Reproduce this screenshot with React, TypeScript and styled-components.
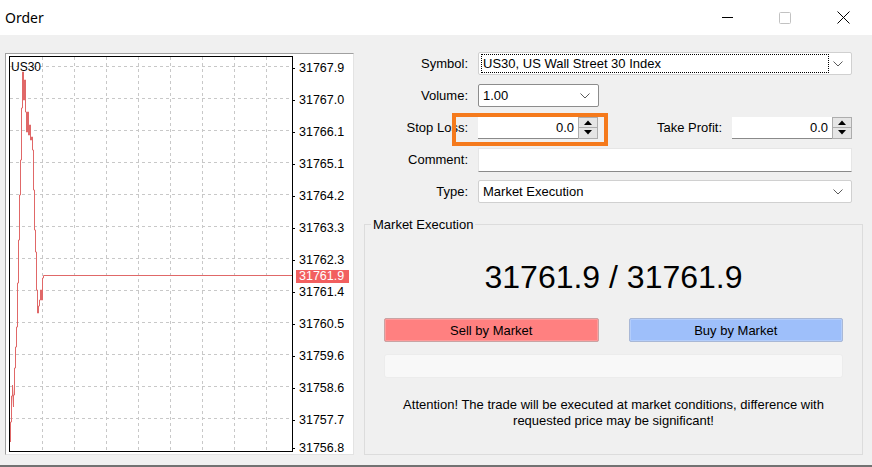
import React from 'react';
import styled, { createGlobalStyle } from 'styled-components';

const Global = createGlobalStyle`
  html, body { margin: 0; padding: 0; }
  body {
    width: 872px; height: 467px; overflow: hidden; background: #fff;
    font-family: "Liberation Sans", Arial, sans-serif; color: #000;
  }
`;

const Window = styled.div`
  width: 872px; height: 467px; display: flex; flex-direction: column; background: #f0f0f0;
`;

const TitleBar = styled.div`
  height: 35px; flex: none; background: #fff; display: flex; align-items: center;
`;

const Title = styled.div`
  flex: 1; padding-left: 5px; font-family: "Noto Sans", "Open Sans", sans-serif; font-size: 14px; color: #000;
`;

const WinButton = styled.div`
  width: 58px; height: 35px; display: flex; align-items: center; justify-content: center;
`;

const Body = styled.div`
  flex: 1; min-height: 0; display: flex; padding: 17px 0 0 5px; border-bottom: 2px solid #727272;
`;

/* ---------- chart ---------- */
const ChartPanel = styled.div`
  margin-top: 1px; width: 349px; height: 402px; box-sizing: border-box; flex: none;
  border: 1px solid; border-color: #a0a0a0 #e3e3e3 #e3e3e3 #a0a0a0;
  background: #fff; display: flex; padding: 2px 0 2px 3px;
`;

const PlotFrame = styled.div`
  position: relative; width: 284px; height: 396px; box-sizing: border-box; flex: none;
  border: 1px solid #000;
`;

const SymbolTag = styled.div`
  position: absolute; left: 1px; top: 3px; font-size: 12px; line-height: 14px;
`;

const Axis = styled.div`
  position: relative; flex: 1; display: flex; flex-direction: column;
`;

const AxisRow = styled.div<{ $last?: boolean }>`
  height: ${p => (p.$last ? 'auto' : '32px')}; flex: none; display: flex; align-items: flex-start;
  padding-top: ${p => (p.$last ? '1px' : '5px')}; box-sizing: border-box;
`;

const Tick = styled.span`
  width: 2px; height: 1px; background: #000; margin-top: 7px; flex: none;
`;

const AxisLabel = styled.span`
  margin-left: 4px; font-size: 12.5px; line-height: 14px;
`;

const PriceTag = styled.div`
  position: absolute; left: 3px; top: 214px; width: 53px; height: 13px;
  background: #f25f5f; color: #fff; font-size: 12.5px; line-height: 13px; padding-left: 3px; box-sizing: border-box;
`;

/* ---------- form ---------- */
const Form = styled.div`
  flex: 1; display: flex; flex-direction: column;
`;

const Fields = styled.div`
  display: flex; flex-direction: column; gap: 9px; padding-right: 20px;
`;

const Row = styled.div`
  position: relative; height: 23px; display: flex; align-items: center;
`;

const Label = styled.div<{ $w?: number }>`
  width: ${p => p.$w ?? 114}px; flex: none; text-align: right; font-size: 13px; margin-right: 10px;
`;

const Grow = styled.div`
  flex: 1;
`;

const SelectBox = styled.div<{ $w?: number; $dark?: boolean }>`
  ${p => (p.$w ? `width: ${p.$w}px; flex: none;` : 'flex: 1;')}
  height: 23px; box-sizing: border-box; background: #fff;
  border: 1px solid ${p => (p.$dark ? '#8c8c8c' : '#d0d0d0')}; border-radius: 2px;
  display: flex; align-items: center; padding: 0 8px 0 2px; font-size: 13px;
`;

const FocusText = styled.div`
  flex: 1; height: 19px; box-sizing: border-box; border: 1px dotted #000;
  display: flex; align-items: center; padding-left: 1px; margin-right: 4px;
`;

const PlainText = styled.div`
  flex: 1; padding-left: 2px;
`;

const NumInput = styled.div`
  width: 100px; height: 22px; box-sizing: border-box; background: #fff; flex: none;
  border-bottom: 1px solid #8a8a8a; font-size: 13px; display: flex; align-items: center; justify-content: flex-end;
  padding-right: 4px;
`;

const Spin = styled.div`
  width: 20px; height: 22px; box-sizing: border-box; flex: none;
  border: 1px solid #adadad; background: #e5e5e5; display: flex; flex-direction: column;
`;

const SpinHalf = styled.div<{ $top?: boolean }>`
  flex: 1; display: flex; align-items: center; justify-content: center;
  ${p => (p.$top ? 'border-bottom: 1px solid #adadad;' : '')}
`;

const TextField = styled.div`
  flex: 1; height: 24px; box-sizing: border-box; background: #fff;
  border: 1px solid #e6e6e6; border-bottom-color: #8a8a8a;
`;

const Highlight = styled.div`
  position: absolute; left: 98px; top: -3px; width: 156px; height: 33px; box-sizing: border-box;
  border: 4px solid #f57a1c; pointer-events: none;
`;

const Group = styled.fieldset`
  margin: 14px 9px 0 10px; padding: 0 19px 25px; border: 1px solid #dcdcdc; min-width: 0;
`;

const Legend = styled.legend`
  margin-left: -13px; padding: 0 2px; font-size: 13px; line-height: 15px;
`;

const Quote = styled.div`
  margin-top: 25px; height: 40px; line-height: 40px; text-align: center; font-size: 32px;
`;

const Buttons = styled.div`
  margin-top: 21px; display: flex; gap: 30px;
`;

const TradeButton = styled.div<{ $kind: 'sell' | 'buy' }>`
  flex: 1; height: 24px; box-sizing: border-box; border-radius: 2px;
  background: ${p => (p.$kind === 'sell' ? '#ff8080' : '#9ebffa')};
  border: 1px solid ${p => (p.$kind === 'sell' ? '#c9a3a3' : '#a9b8d6')};
  box-shadow: inset 0 0 0 1px ${p => (p.$kind === 'sell' ? '#ff9a9a' : '#b3cdfb')};
  display: flex; align-items: center; justify-content: center; font-size: 13px;
`;

const Bar = styled.div`
  margin-top: 12px; height: 24px; border-radius: 3px; background: #f8f8f8; border: 1px solid #ececec; box-sizing: border-box;
`;

const Notice = styled.div`
  margin-top: 19px; font-size: 13px; line-height: 16px; text-align: center; padding: 0 12px;
`;

/* ---------- icons ---------- */
const Chevron = () => (
  <svg width="10" height="6" viewBox="0 0 10 6">
    <path d="M0.5 0.5 L5 5 L9.5 0.5" fill="none" stroke="#5a5a5a" strokeWidth="1" />
  </svg>
);

const Arrow = ({ up }: { up?: boolean }) => (
  <svg width="8" height="5" viewBox="0 0 8 5">
    <path d={up ? 'M0 5 L4 0.5 L8 5 Z' : 'M0 0 L4 4.5 L8 0 Z'} fill="#000" />
  </svg>
);

const Spinner = () => (
  <Spin>
    <SpinHalf $top><Arrow up /></SpinHalf>
    <SpinHalf><Arrow /></SpinHalf>
  </Spin>
);

const linePath =
  'M10.5,442 V422 H11.5 V396 H12.5 V385 L13.5,407 V395 H14.5 V368 H15.5 V347 H16.5 V327 H17.5 V283 H18.5 V240 ' +
  'H19.5 V195 H20.5 V160 H21.5 V108 H22.5 V72 H23.5 V100 H24.5 V80 H25.5 V112 H26.5 V132 H27.5 V112 H28.5 V135 ' +
  'H29.5 V125 H30.5 V140 H31.5 V137 H32.5 V150 H33.5 V190 H34.5 V230 H35.5 V252 H36.5 V290 H37.5 V313 H38.5 V306 ' +
  'H39.5 V300 H40.5 V290 H41.5 V300 H42.5 V278 H43.5 V275.5 H292';

const ChartSvg = () => {
  const vx = [42, 74, 106, 138, 170, 202, 234, 266];
  const hy = [66, 98, 130, 162, 194, 226, 258, 290, 322, 354, 386, 418];
  return (
    <svg width="282" height="394" viewBox="0 0 282 394" style={{ display: 'block' }}>
      <g transform="translate(-10,-57)">
        {vx.map(x => (
          <line key={'v' + x} x1={x + 0.5} y1={57} x2={x + 0.5} y2={451} stroke="#c8c8c8" strokeDasharray="3 3" />
        ))}
        {hy.map(y => (
          <line key={'h' + y} x1={10} y1={y + 0.5} x2={292} y2={y + 0.5} stroke="#c8c8c8" strokeDasharray="3 3" />
        ))}
        <path d={linePath} fill="none" stroke="#e06868" strokeWidth="1" />
      </g>
    </svg>
  );
};

const prices = [
  '31767.9', '31767.0', '31766.1', '31765.1', '31764.2', '31763.3', '31762.3',
  '31761.4', '31760.5', '31759.6', '31758.6', '31757.7', '31756.8',
];

export default function App() {
  return (
    <>
      <Global />
      <Window>
        <TitleBar>
          <Title>Order</Title>
          <WinButton>
            <svg width="11" height="1" viewBox="0 0 11 1"><rect width="11" height="1" fill="#000" /></svg>
          </WinButton>
          <WinButton>
            <svg width="12" height="12" viewBox="0 0 12 12">
              <rect x="0.5" y="0.5" width="11" height="11" rx="1" fill="none" stroke="#c2c2c2" />
            </svg>
          </WinButton>
          <WinButton>
            <svg width="13" height="13" viewBox="0 0 13 13">
              <path d="M0.5 0.5 L12.5 12.5 M12.5 0.5 L0.5 12.5" stroke="#000" strokeWidth="1" />
            </svg>
          </WinButton>
        </TitleBar>
        <Body>
          <ChartPanel>
            <PlotFrame>
              <ChartSvg />
              <SymbolTag>US30</SymbolTag>
            </PlotFrame>
            <Axis>
              {prices.map((p, i) => (
                <AxisRow key={p} $last={i === prices.length - 1}>
                  <Tick />
                  <AxisLabel>{p}</AxisLabel>
                </AxisRow>
              ))}
              <PriceTag>31761.9</PriceTag>
            </Axis>
          </ChartPanel>
          <Form>
            <Fields>
              <Row>
                <Label>Symbol:</Label>
                <SelectBox>
                  <FocusText>US30, US Wall Street 30 Index</FocusText>
                  <Chevron />
                </SelectBox>
              </Row>
              <Row>
                <Label>Volume:</Label>
                <SelectBox $w={121} $dark>
                  <PlainText>1.00</PlainText>
                  <Chevron />
                </SelectBox>
              </Row>
              <Row>
                <Label>Stop Loss:</Label>
                <NumInput>0.0</NumInput>
                <Spinner />
                <Grow />
                <Label $w={110}>Take Profit:</Label>
                <NumInput>0.0</NumInput>
                <Spinner />
                <Highlight />
              </Row>
              <Row>
                <Label>Comment:</Label>
                <TextField />
              </Row>
              <Row>
                <Label>Type:</Label>
                <SelectBox>
                  <PlainText>Market Execution</PlainText>
                  <Chevron />
                </SelectBox>
              </Row>
            </Fields>
            <Group>
              <Legend>Market Execution</Legend>
              <Quote>31761.9 / 31761.9</Quote>
              <Buttons>
                <TradeButton $kind="sell">Sell by Market</TradeButton>
                <TradeButton $kind="buy">Buy by Market</TradeButton>
              </Buttons>
              <Bar />
              <Notice>
                Attention! The trade will be executed at market conditions, difference with requested price may be
                significant!
              </Notice>
            </Group>
          </Form>
        </Body>
      </Window>
    </>
  );
}
